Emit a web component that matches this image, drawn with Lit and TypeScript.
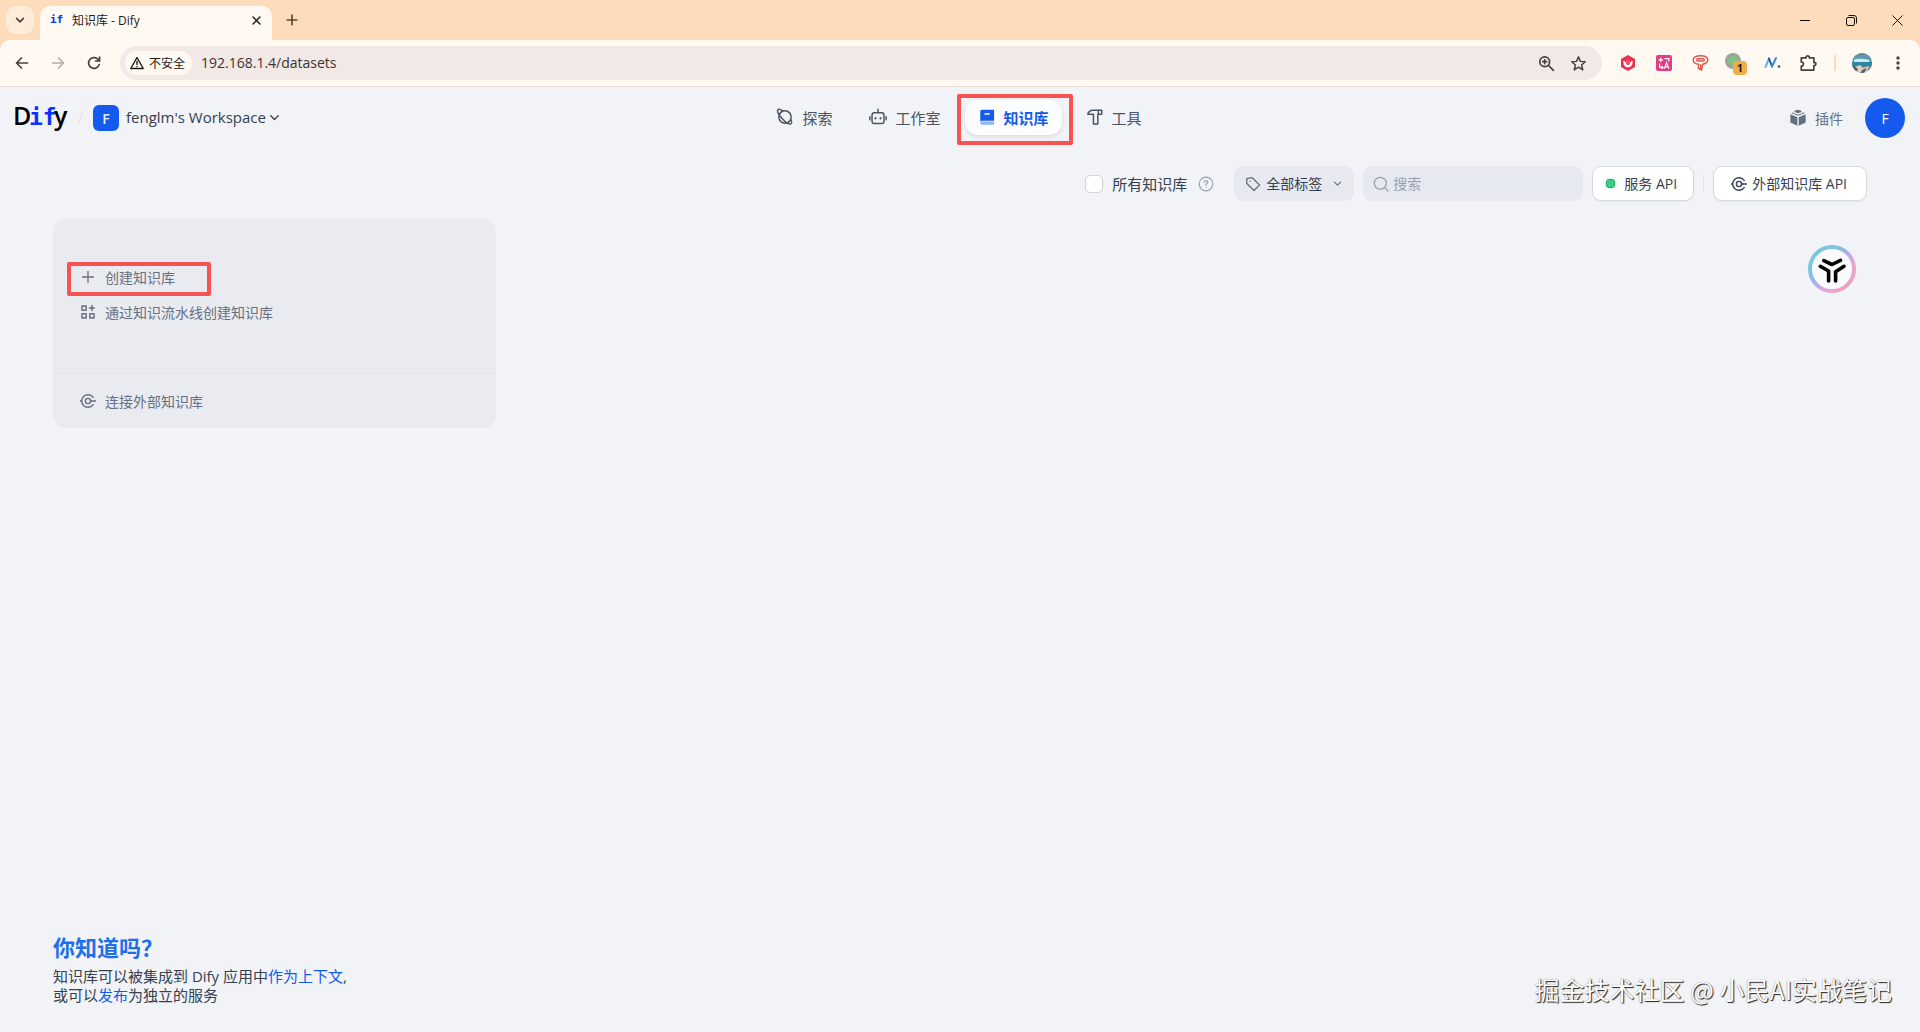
import { LitElement, html, css, svg } from "lit";
import { customElement, property } from "lit/decorators.js";

const shared = css`
  * { box-sizing: border-box; }
  button, input, select { font: inherit; color: inherit; margin: 0; }
  button { border: 0; background: none; padding: 0; cursor: pointer; display: inline-flex; align-items: center; }
  a { color: inherit; text-decoration: none; }
  svg { display: block; flex: none; }
`;

const line = (size: number, body: unknown, width = 1.5, box = 16) => html`
  <svg width=${size} height=${size} viewBox="0 0 ${box} ${box}" fill="none" stroke="currentColor"
    stroke-width=${width} stroke-linecap="round" stroke-linejoin="round" aria-hidden="true">${body}</svg>`;

const icons = {
  chevron: (s: number, w = 1.5) => line(s, svg`<path d="M2.500 5.500l5.500 5.500 5.500-5.500"/>`, w),
  plus: (s: number, w = 1.5) => line(s, svg`<path d="M8 2.500v11M2.500 8h11"/>`, w),
  cross: (s: number, w = 1.5) => line(s, svg`<path d="M3 3l10 10M13 3L3 13"/>`, w),
  planet: line(18, svg`<circle cx="8" cy="8" r="5.500"/><path d="M5.800 2.500C3.900 1.300 2.200.9 1.700 1.600c-.9 1.200.9 4.700 3.900 7.900s6.500 5.300 7.800 4.500c.8-.5.6-1.900-.3-3.800"/>`, 1.3),
  robot: line(18, svg`<rect x="2.700" y="4.200" width="10.600" height="9.600" rx="2"/><path d="M8 4V1.200M.8 7.800v2.600M15.200 7.800v2.600"/><path d="M5.800 8.800v.5M10.200 8.800v.5" stroke-width="1.700"/>`, 1.3),
  book: html`<svg width="18" height="18" viewBox="0 0 16 16" aria-hidden="true">
      <path d="M3.600 1.500h10.700v9.900H3.300c-.5 0-1 .2-1.300.5V3.100c0-.9.7-1.600 1.600-1.600z" fill="#155aef"/>
      <path d="M2 13.200c0-.7.600-1.200 1.300-1.200h11v2.900H3.500c-.8 0-1.500-.7-1.500-1.700z" fill="#155aef" opacity=".45"/>
      <path d="M5.800 5.300h4.600" stroke="#fff" stroke-width="1.300"/></svg>`,
  hammer: line(18, svg`<path d="M1.600 5.600C2.200 3.300 3.700 2 6 2h8v3.600h-3.500V14.200H6.600V5.600z"/><path d="M11 2v3.500"/>`, 1.3),
  cube: html`<svg width="18" height="18" viewBox="0 0 16 16" fill="currentColor" aria-hidden="true">
      <path d="M5 1.600L8 .6l3 1v1.100L8 3.800 5 2.700z"/><path d="M1.900 3.600l2-.8v.8L8 5.100l4.100-1.500v-.8l2 .8L8 6.100z"/>
      <path d="M1.200 4.700l6.200 2.600v7.600l-6.200-3zM14.800 4.700L8.600 7.300v7.600l6.200-3z"/></svg>`,
  help: line(16, svg`<circle cx="8" cy="8" r="6.800"/><path d="M6.200 6.500c0-1.100.8-1.800 1.800-1.800s1.800.7 1.800 1.600c0 1.200-1.800 1.300-1.800 2.600M8 11v.1"/>`, 1.2),
  tag: line(16, svg`<path d="M1.700 2.600L7.200 1.700 14.600 9 9 14.500 1.800 7.500z"/><path d="M5.200 5.300v.1"/>`, 1.3),
  search: line(16, svg`<circle cx="7.300" cy="7.300" r="6"/><path d="M11.800 11.800L15 15"/>`, 1.3),
  link: line(16, svg`<circle cx="8" cy="8" r="2.600"/><path d="M13.200 4.400A6.300 6.300 0 1 0 13.200 11.600M.3 8h1.400M10.600 8h5"/>`, 1.4),
  blocks: line(16, svg`<path d="M2 2h4.200v4.200H2zM2 9.800h4.200V14H2zM9.800 9.800H14V14H9.800zM11.900 1.500v5M9.400 4h5"/>`, 1.5),
};

@customElement("browser-bar")
class BrowserBar extends LitElement {
  static styles = [shared, css`
    :host { display: block; color: #4a403a; font-family: "Open Sans", "Noto Sans CJK SC", sans-serif; background: #fddcbb; }
    .tabs { display: flex; height: 40px; padding: 6px 0 0 6px; align-items: flex-start; }
    .chooser { width: 28px; height: 28px; border-radius: 10px; background: #feebd9; justify-content: center; }
    .tab { display: flex; align-items: center; width: 232px; height: 34px; margin-left: 6px; padding: 0 10px 6px; gap: 9px;
      background: #fff9f2; border-radius: 10px 10px 0 0; font-size: 12px; color: #1f1a17; }
    .fav { width: 13px; height: 12px; font: bold 11px/12px "DejaVu Sans Mono", monospace; color: #0a33ff; }
    .title { flex: 1; }
    .new { width: 28px; height: 28px; justify-content: center; margin-left: 6px; color: #5b4632; }
    .window { display: flex; margin: -6px 0 0 auto; }
    .window button { width: 46px; height: 40px; justify-content: center; color: #111; }
    .toolbar { display: flex; align-items: center; height: 47px; padding: 0 4px; background: #fff9f2;
      border-radius: 10px 10px 0 0; border-bottom: 1px solid #eadfd8; }
    .toolbar > button { width: 36px; height: 36px; justify-content: center; }
    .toolbar > .dim { color: #b5aca6; }
    .omni { flex: 1; display: flex; align-items: center; height: 34px; margin: 0 8px; padding: 0 8px 0 5px; border-radius: 17px; background: #f2e8e6; }
    .chip { height: 24px; padding: 0 7px 0 4px; gap: 4px; border-radius: 12px; background: #fff9f2; font-size: 12px; color: #1f1a17; }
    .url { flex: 1; border: 0; background: none; padding: 0 0 2px 9px; font-size: 14px; color: #3a3431; outline: 0; }
    .omni .tool { width: 32px; height: 32px; justify-content: center; }
    .divider { width: 2px; height: 16px; margin: 0 8px; background: #fddcbb; }
  `];

  render() {
    return html`
      <div class="tabs">
        <button class="chooser" aria-label="搜索标签页">${icons.chevron(10, 2.6)}</button>
        <div class="tab">
          <span class="fav">if</span><span class="title">知识库 - Dify</span>
          <button aria-label="关闭标签页">${icons.cross(11, 2.2)}</button>
        </div>
        <button class="new" aria-label="新标签页">${icons.plus(14, 1.9)}</button>
        <div class="window">
          <button aria-label="最小化"><svg width="10" height="10"><path d="M0 5.500h10" stroke="currentColor"/></svg></button>
          <button aria-label="还原"><svg width="11" height="11" fill="none" stroke="currentColor"><rect x=".5" y="2.500" width="8" height="8" rx="1.500"/><path d="M2.500 .5h5.500a2.500 2.500 0 0 1 2.500 2.500v5.500"/></svg></button>
          <button aria-label="关闭"><svg width="11" height="11" fill="none" stroke="currentColor"><path d="M.5 .5l10 10M10.500 .5l-10 10"/></svg></button>
        </div>
      </div>
      <div class="toolbar">
        <button aria-label="后退">${line(16, svg`<path d="M13.500 8H3M7.500 3L2.500 8l5 5"/>`, 1.7)}</button>
        <button class="dim" aria-label="前进">${line(16, svg`<path d="M2.500 8h11M8.500 3l5 5-5 5"/>`, 1.7)}</button>
        <button aria-label="刷新">${line(16, svg`<path d="M13.200 9.500a5.400 5.400 0 1 1-1.300-5.300L13.500 6M13.600 2v4h-4"/>`, 1.7)}</button>
        <div class="omni">
          <button class="chip">${line(16, svg`<path d="M8 2.500L14.200 13.500H1.800zM8 6.500v3M8 11.500v.1"/>`, 1.4)}不安全</button>
          <input class="url" aria-label="地址" value="192.168.1.4/datasets" />
          <button class="tool" aria-label="缩放">${line(17, svg`<circle cx="6.300" cy="6.300" r="4.600"/><path d="M9.900 9.900l4.600 4.600M4.500 6.300h3.600M6.300 4.500v3.600"/>`, 1.6)}</button>
          <button class="tool" aria-label="收藏">${line(17, svg`<path d="M8 1.800l1.800 4.200 4.600.4-3.500 3 1.100 4.500L8 11.500l-4 2.400 1.100-4.500-3.500-3 4.600-.4z"/>`, 1.4)}</button>
        </div>
        <button aria-label="扩展 1"><svg width="16" height="16" viewBox="0 0 16 16"><path d="M8 0l7 4v8l-7 4-7-4V4z" fill="#e8304f"/><path d="M3.800 5.500C2.600 9 4.500 12.300 8 12.300S13.400 9 12.200 5.500L10 7.500C10 9.200 9.200 10 8 10S6 9.200 6 7.500z" fill="#fff"/><circle cx="8" cy="7" r="2.400" fill="#ff4f68"/></svg></button>
        <button aria-label="翻译"><svg width="16" height="16" viewBox="0 0 16 16" fill="none" stroke="#fff" stroke-width="1.200"><rect width="16" height="16" rx="2" fill="#de3f83" stroke="none"/><path d="M4.800 2.500v4.600M2.500 4.800h4.600M8.500 3.600h4.300v2.900M3.600 8.500v4h3.200M5.600 11l1.400 1.500-1.400 1.500"/><path d="M8.300 13.600l2.300-6 2.300 6M9.200 11.800h2.900"/></svg></button>
        <button aria-label="扩展 3"><svg width="17" height="16" viewBox="0 0 17 16" fill="none" stroke="#d9574d" stroke-width="1.400"><path d="M8.500 .8c4.500 0 7.300 1.700 7.300 4.100S13 9 10.700 9.200L9.500 15 6.300 13.500 6.800 9.200C3.500 9 1.200 7.300 1.200 4.900S4 .8 8.500 .8zM8.600 9.200v4.500"/><rect x="4.700" y="3.800" width="7.600" height="2.200" rx="1.100"/></svg></button>
        <button aria-label="扩展 4"><svg width="24" height="24" viewBox="0 0 24 24"><circle cx="9" cy="10" r="8" fill="#9fa29f"/><circle cx="9" cy="10" r="5" fill="#7fc383"/><rect x="9" y="10" width="14" height="14" rx="4" fill="#f0ad4c"/><text x="16" y="21" font-size="11" font-weight="700" text-anchor="middle" font-family="Open Sans" fill="#222">1</text></svg></button>
        <button aria-label="扩展 5"><svg width="17" height="14" viewBox="0 0 17 14" fill="none" stroke-linecap="round"><path d="M1.500 11L5 2.500" stroke="#5bb4e5" stroke-width="2"/><path d="M5 2.500L8 10.500" stroke="#24579c" stroke-width="2"/><path d="M8 10.500L12 2" stroke="#3c8fd4" stroke-width="2"/><circle cx="15" cy="10.500" r="1.300" fill="#23548f"/></svg></button>
        <button aria-label="扩展程序">${line(18, svg`<path d="M2 3.500h4.200c0-2.400 3-2.400 3 0h4v4c2.400 0 2.400 2.800 0 2.800v4H2v-3.600c2.600 0 2.600-3.600 0-3.600z"/>`, 1.5)}</button>
        <span class="divider"></span>
        <button aria-label="个人资料"><svg width="20" height="20" viewBox="0 0 20 20"><clipPath id="p"><circle cx="10" cy="10" r="10"/></clipPath><g clip-path="url(#p)"><path fill="#5f8795" d="M0 0h20v20H0z"/><path fill="#5d99ae" d="M0 2h20v5H0z"/><path fill="#d3e7ea" d="M2 7c4-2 10-1 16 0l-1 2H2z"/><path fill="#268aa3" d="M0 9h20v4H0z"/><path fill="#e3cdb8" d="M3 14l5-2 3 3 6-2-2 6H6z"/><path fill="#4a5a66" d="M0 12l6 4-3 4H0zM10 17l5-2-3 5H9z"/></g></svg></button>
        <button aria-label="菜单"><svg width="4" height="16" fill="currentColor"><circle cx="2" cy="3" r="1.700"/><circle cx="2" cy="8" r="1.700"/><circle cx="2" cy="13" r="1.700"/></svg></button>
      </div>`;
  }
}

@customElement("site-header")
class SiteHeader extends LitElement {
  @property() workspace = "fenglm's Workspace";

  static styles = [shared, css`
    :host { display: grid; grid-template-columns: 1fr auto 1fr; align-items: center; height: 62px; padding: 0 15px 0 13px; color: #495464; }
    .left { display: flex; align-items: center; }
    .slash { margin: 0 10px 0 8px; color: #dadde3; }
    .badge { width: 26px; height: 26px; border-radius: 6px; background: #155aef; color: #e8efff; display: grid; place-items: center; font-size: 14px; font-weight: 600; }
    .space { gap: 7px; font-size: 15px; color: #354052; }
    .name { display: flex; align-items: center; gap: 3px; padding-bottom: 2px; }
    nav { display: flex; gap: 11px; margin-bottom: 2px; }
    .item { position: relative; display: flex; align-items: center; gap: 8px; height: 35px; padding: 0 13px; border-radius: 13px; font-size: 15px; }
    .on { background: #fcfdff; color: #155aef; font-weight: 700; box-shadow: 0 2px 4px #1018281a; }
    .mark { position: absolute; inset: -6px -11px -10px -8px; border: 4px solid #f75352; border-radius: 2px; pointer-events: none; }
    .right { display: flex; justify-content: flex-end; align-items: center; gap: 22px; }
    .plugin { display: flex; align-items: center; gap: 8px; font-size: 14px; color: #676f83; }
    .me { width: 40px; height: 40px; border-radius: 50%; background: #155aef; color: #fff; justify-content: center; font-size: 14px; }
  `];

  render() {
    return html`
      <div class="left">
        <a href="#"><svg width="56" height="40" viewBox="0 0 56 40" role="img" aria-label="Dify" font-weight="600">
          <text x="0" y="27" font-size="25" font-family="Open Sans">D</text>
          <text x="16" y="27" font-size="23" font-weight="700" font-family="DejaVu Sans Mono" fill="#0a33ff">if</text>
          <text x="41" y="27" font-size="25" font-family="Open Sans">y</text></svg></a>
        <svg class="slash" width="6" height="15" stroke="currentColor"><path d="M5.500 .5l-5 14"/></svg>
        <button class="space"><span class="badge">F</span><span class="name">${this.workspace}${icons.chevron(11, 1.9)}</span></button>
      </div>
      <nav>
        <a class="item" href="#explore">${icons.planet}探索</a>
        <a class="item" href="#apps">${icons.robot}工作室</a>
        <a class="item on" href="#datasets" aria-current="page">${icons.book}知识库<span class="mark"></span></a>
        <a class="item" href="#tools">${icons.hammer}工具</a>
      </nav>
      <div class="right">
        <a class="plugin" href="#plugins">${icons.cube}插件</a>
        <button class="me" aria-label="账户">F</button>
      </div>`;
  }
}

@customElement("dataset-filters")
class DatasetFilters extends LitElement {
  static styles = [shared, css`
    :host { display: flex; justify-content: flex-end; align-items: center; gap: 9px; padding: 17px 53px 18px; font-size: 14px; color: #354052; }
    .all { display: flex; align-items: center; gap: 9px; font-size: 15px; }
    .all input { appearance: none; width: 18px; height: 18px; border: 1px solid #d0d5dc; border-radius: 5px; background: #fff; }
    .help { margin: 0 11px 0 2px; color: #98a2b2; }
    .field { display: flex; align-items: center; height: 35px; border-radius: 9px; background: #e6e9ef; }
    .tags { width: 120px; padding: 0 12px 0 11px; gap: 5px; color: #676f83; }
    .tags select { flex: 1; min-width: 0; appearance: none; border: 0; background: none; padding: 0; color: #354052; outline: 0; }
    .search { width: 220px; padding: 0 10px; gap: 4px; color: #98a2b2; }
    .search input { flex: 1; min-width: 0; border: 0; padding: 0; background: none; outline: 0; }
    .search input::placeholder { color: #98a2b2; opacity: 1; }
    .btn { height: 35px; border: 1px solid #d5d9e0; border-radius: 9px; background: #fff; box-shadow: 0 1px 2px #1018280d; }
    .service { padding: 0 16px 0 13px; gap: 9px; }
    .external { padding: 0 19px 0 17px; gap: 5px; }
    .btn .text { padding-bottom: 2px; }
    .dot { width: 9px; height: 9px; border: 1px solid #17b26a; border-radius: 3px; background: #3ccb89; box-shadow: 0 0 4px #47cd8966; }
    .bar { width: 1px; height: 17px; background: #dfe3e9; }
  `];

  render() {
    return html`
      <label class="all"><input type="checkbox" />所有知识库</label>
      <span class="help">${icons.help}</span>
      <label class="field tags">${icons.tag}<select aria-label="标签"><option>全部标签</option></select>${icons.chevron(9, 2)}</label>
      <label class="field search">${icons.search}<input type="text" aria-label="搜索" placeholder="搜索" /></label>
      <button class="btn service"><span class="dot"></span><span class="text">服务 API</span></button>
      <span class="bar"></span>
      <button class="btn external">${icons.link}<span class="text">外部知识库 API</span></button>`;
  }
}

@customElement("create-card")
class CreateCard extends LitElement {
  static styles = [shared, css`
    :host { display: flex; flex-direction: column; min-height: 209px; border-radius: 13px; background: #e9ebf0; color: #676f83; font-size: 14px; overflow: hidden; }
    .main { flex: 1; display: flex; flex-direction: column; justify-content: center; align-items: flex-start; padding-bottom: 4px; }
    .row { position: relative; display: flex; align-items: center; gap: 9px; height: 35px; margin-left: 27px; }
    .foot { display: flex; align-items: center; height: 55px; border-top: 1px solid #e1e4e9; }
    .mark { position: absolute; inset: 3px -36px -2px -13px; border: 4px solid #f75352; border-radius: 2px; pointer-events: none; }
  `];

  render() {
    return html`
      <div class="main">
        <a class="row" href="#create">${icons.plus(16, 1.3)}创建知识库<span class="mark"></span></a>
        <a class="row" href="#pipeline">${icons.blocks}通过知识流水线创建知识库</a>
      </div>
      <div class="foot"><a class="row" href="#connect">${icons.link}连接外部知识库</a></div>`;
  }
}

@customElement("app-root")
class AppRoot extends LitElement {
  static styles = [shared, css`
    :host { position: relative; display: flex; flex-direction: column; min-height: 100vh; background: #f1f3f7;
      font-family: "Open Sans", "Noto Sans CJK SC", sans-serif; }
    .cards { flex: 1; display: grid; grid-template-columns: repeat(4, 1fr); gap: 14px; align-content: start; padding: 0 53px; }
    footer { padding: 0 53px 27px; color: #354052; }
    h2 { margin: 0; font-size: 22px; line-height: 32px; font-weight: 700; color: #1f6fec; }
    p { margin: 0; padding-top: 4px; font-size: 15px; line-height: 19px; }
    p a { color: #155aef; }
    .helper { position: absolute; right: 64px; top: 245px; }
    .credit { position: absolute; right: 28px; bottom: 25px; font-family: "Noto Sans CJK SC", sans-serif; font-size: 25px; line-height: 36px; color: #fff;
      text-shadow: 1px 1px 1px #222, 0 0 1px #777; }
  `];

  render() {
    return html`
      <browser-bar></browser-bar>
      <site-header></site-header>
      <dataset-filters></dataset-filters>
      <main class="cards"><create-card></create-card></main>
      <footer>
        <h2>你知道吗？</h2>
        <p>知识库可以被集成到 Dify 应用中<a href="#context">作为上下文</a>,<br />或可以<a href="#publish">发布</a>为独立的服务</p>
      </footer>
      <button class="helper" aria-label="助手">
        <svg width="48" height="48" viewBox="0 0 48 48" fill="none">
          <defs><linearGradient id="ring" x1="0.100" y1="0.100" x2="0.900" y2="0.900"><stop offset="0" stop-color="#72cbdc"/><stop offset=".3" stop-color="#86bfe0"/><stop offset=".5" stop-color="#b7a9ee"/><stop offset=".7" stop-color="#e3a8d2"/><stop offset="1" stop-color="#f29dc0"/></linearGradient></defs>
          <circle cx="24" cy="24" r="22" fill="#fafbfd" stroke="url(#ring)" stroke-width="4"/>
          <g stroke="#050505" stroke-width="3.600" stroke-linecap="round" stroke-linejoin="round">
            <path d="M15.800 15.600L24 19.500 32.500 15.400"/><path d="M12.300 21.300L20.600 26V36"/><path d="M36 21.300L27.600 26.800V36"/></g>
        </svg>
      </button>
      <div class="credit">掘金技术社区 @ 小民AI实战笔记</div>`;
  }
}
